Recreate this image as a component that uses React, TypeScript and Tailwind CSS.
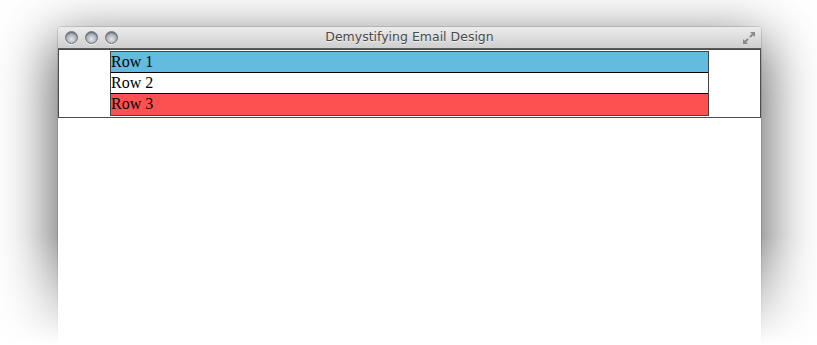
const rows = [
  { label: 'Row 1', bg: 'bg-[#63bcdf]' },
  { label: 'Row 2', bg: 'bg-white' },
  { label: 'Row 3', bg: 'bg-[#fc5150]' },
]

const Light = () => (
  <span className="block w-[13px] h-[13px] rounded-full border border-[#6f7479] bg-[radial-gradient(circle_at_50%_65%,#e4e8ec_0%,#a9b0b7_55%,#7d858d_100%)] shadow-[inset_0_1px_1px_rgba(0,0,0,0.35),0_1px_0_rgba(255,255,255,0.7)]" />
)

export default function App() {
  return (
    <div className="relative w-[817px] h-[345px] overflow-hidden bg-white pt-[27px] pl-[58px]">
      <div className="w-[703px] h-[360px] bg-white rounded-t-[4px] shadow-[0_18px_55px_6px_rgba(0,0,0,0.62),0_0_0_1px_rgba(0,0,0,0.12)]">
        {/* title bar */}
        <div className="relative h-[22px] flex items-center justify-center rounded-t-[4px] border-b border-[#5a5a5a] bg-gradient-to-b from-[#ececec] to-[#cfcfcf]">
          <div className="absolute left-[7px] top-[4px] flex gap-[7px]">
            <Light />
            <Light />
            <Light />
          </div>
          <span className="text-[12.5px] text-[#4a4a4a] [font-family:'DejaVu_Sans',sans-serif] [text-shadow:0_1px_0_rgba(255,255,255,0.6)]">
            Demystifying Email Design
          </span>
          <svg className="absolute right-[4px] top-[3px]" width="16" height="16" viewBox="0 0 16 16">
            <g fill="#8a8a8a">
              <path d="M9 2h5v5l-1.8-1.8-2.6 2.6-1.4-1.4 2.6-2.6z" />
              <path d="M7 14H2V9l1.8 1.8 2.6-2.6 1.4 1.4-2.6 2.6z" />
            </g>
          </svg>
        </div>
        {/* content */}
        <div className="border border-[#4d4d4d] py-[1px] flex justify-center">
          <div className="w-[599px] border border-[#444] [font-family:'Liberation_Serif',serif] text-[16px] leading-[20px] text-black">
            {rows.map((r, i) => (
              <div key={r.label} className={`${r.bg} h-[21px] ${i < 2 ? 'border-b border-black' : ''}`}>
                {r.label}
              </div>
            ))}
          </div>
        </div>
      </div>
      {/* shadow fade at the bottom edge of the capture */}
      <div className="absolute left-0 bottom-0 w-[58px] h-[110px] bg-gradient-to-b from-white/0 to-white" />
      <div className="absolute right-0 bottom-0 w-[56px] h-[110px] bg-gradient-to-b from-white/0 to-white" />
    </div>
  )
}
